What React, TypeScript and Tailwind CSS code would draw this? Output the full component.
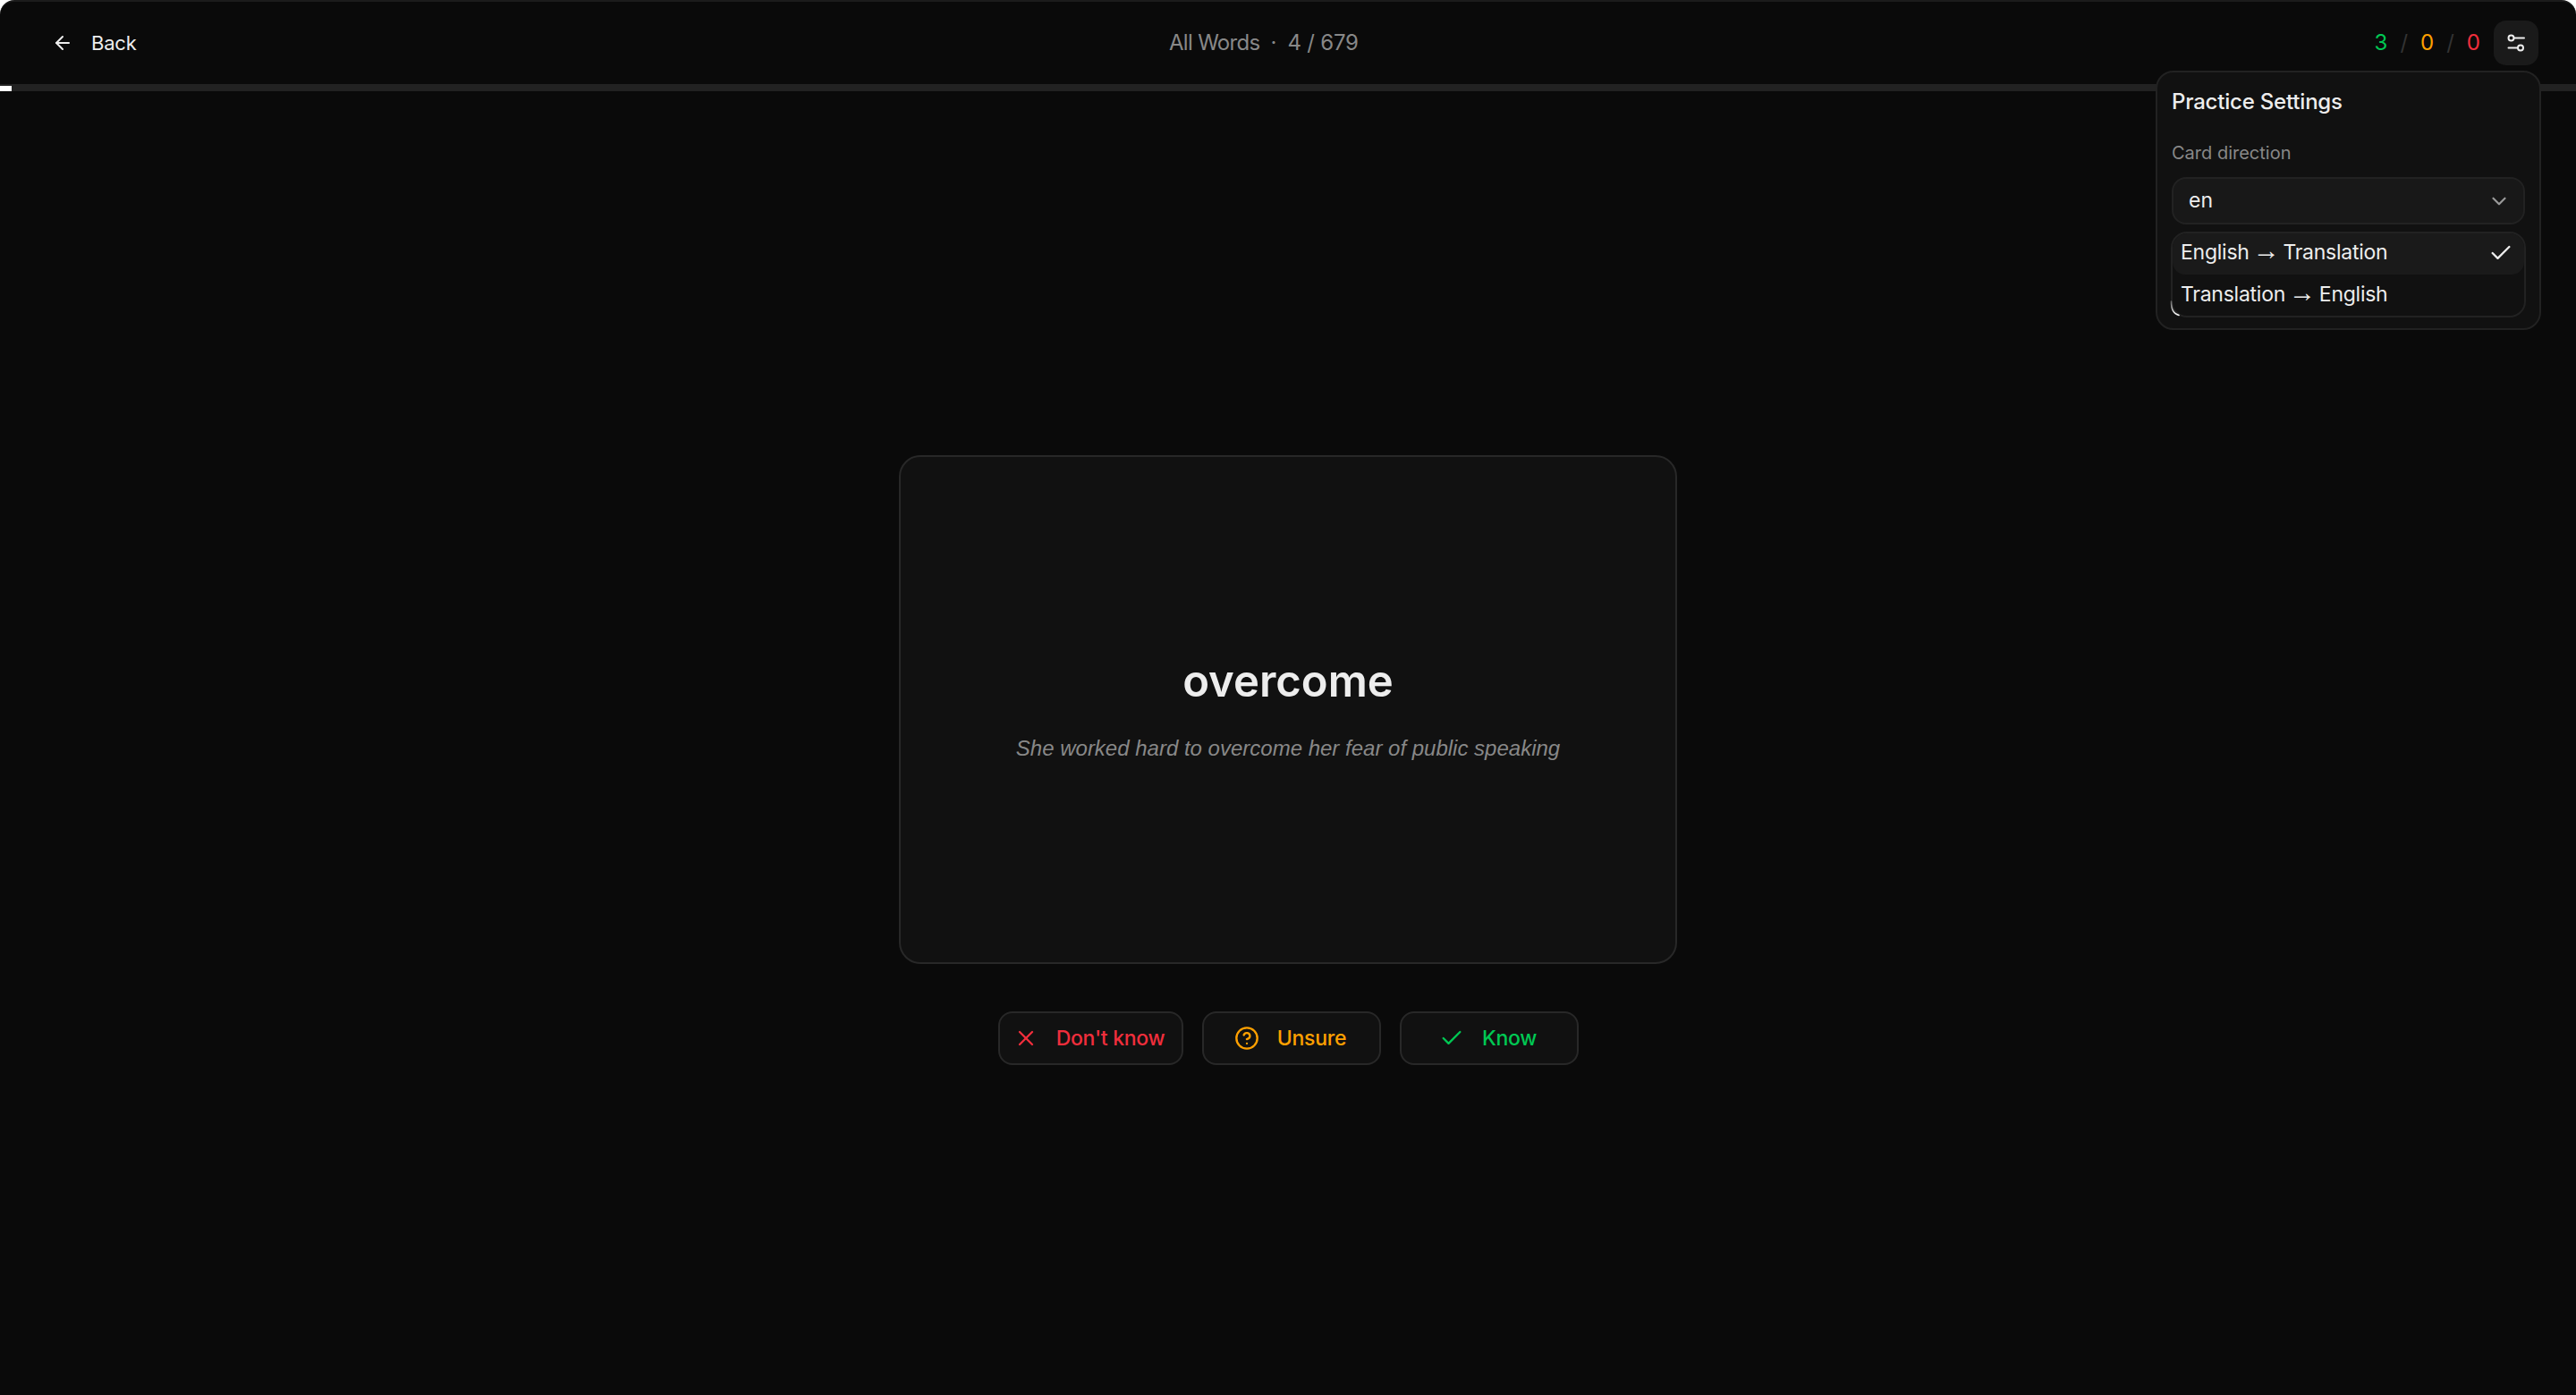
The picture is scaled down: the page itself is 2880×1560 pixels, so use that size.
import { ArrowLeft, Check, ChevronDown, CircleHelp, X } from "lucide-react";

function Sliders() {
  return (
    <svg width="24" height="24" viewBox="0 0 24 24" fill="none" stroke="currentColor" strokeWidth="2" strokeLinecap="round">
      <circle cx="6.5" cy="6.5" r="3" />
      <path d="M10 6.5H21" />
      <circle cx="17" cy="17.5" r="3" />
      <path d="M3.5 17.5H13.5" />
    </svg>
  );
}

function Arrow() {
  return <span className="mx-[4px] font-['Liberation_Sans',sans-serif] text-[30px] font-normal leading-[0]">→</span>;
}

export default function App() {
  return (
    <div className="relative flex h-[1560px] w-[2880px] flex-col overflow-hidden rounded-t-[16px] border-t-2 border-[#1c1c1c] bg-[#0a0a0a] font-['Inter',sans-serif] text-white">
      <header className="flex h-[92px] shrink-0 items-center justify-between pl-[58px] pr-[42px]">
        <div className="flex items-center gap-[20px] text-[22px] tracking-[-0.2px] text-[#ededed]">
          <ArrowLeft size={24} strokeWidth={2} />
          <span>Back</span>
        </div>
        <div className="absolute left-[1307px] flex items-center text-[24px] text-[#888888]">
          <span className="tracking-[-0.7px]">All Words</span>
          <span className="mx-[12px]">·</span>
          <span className="tracking-[-0.2px]">4 / 679</span>
        </div>
        <div className="flex items-center gap-[15px]">
          <div className="flex items-center gap-[14px] text-[24px]">
            <span className="text-[#00c853]">3</span>
            <span className="text-[#333333]">/</span>
            <span className="text-[#ffa000]">0</span>
            <span className="text-[#333333]">/</span>
            <span className="text-[#f02e3c]">0</span>
          </div>
          <button className="flex h-[50px] w-[50px] items-center justify-center rounded-[14px] bg-[#1a1a1a] text-[#ededed]">
            <Sliders />
          </button>
        </div>
      </header>
      <div className="h-[8px] w-full shrink-0 bg-[#222222]">
        <div className="mt-[2px] h-[6px] w-[13px] bg-white" />
      </div>
      <main className="flex flex-1 flex-col items-center pt-[407px]">
        <div className="flex h-[569px] w-[870px] flex-col items-center justify-center rounded-[24px] border-2 border-[#282828] bg-[#111111]">
          <h1 className="text-[49px] font-semibold leading-[58px] text-[#ededed]">overcome</h1>
          <p className="mt-[28px] font-['Liberation_Sans',sans-serif] text-[24px] italic text-[#888888]">She worked hard to overcome her fear of public speaking</p>
        </div>
        <div className="mt-[53px] flex gap-[21px] text-[23px] font-medium tracking-[-0.3px]">
          <button className="flex h-[60px] w-[207px] items-center justify-center gap-[20px] rounded-[16px] border-2 border-[#282828] bg-[#111111] pr-[3px] text-[#f02e3c]">
            <X size={28} /> <span>Don't know</span>
          </button>
          <button className="flex h-[60px] w-[200px] items-center justify-center gap-[20px] rounded-[16px] border-2 border-[#282828] bg-[#111111] pr-[2px] text-[#ffa000]">
            <CircleHelp size={28} /> <span>Unsure</span>
          </button>
          <button className="flex h-[60px] w-[200px] items-center justify-center gap-[20px] rounded-[16px] border-2 border-[#282828] bg-[#111111] pr-[2px] text-[#00c853]">
            <Check size={28} /> <span>Know</span>
          </button>
        </div>
      </main>
      <div className="absolute left-[2410px] top-[77px] h-[290px] w-[431px] rounded-[20px] border-2 border-[#222222] bg-[#111111] px-[16px] pt-[17px]">
        <div className="text-[24px] font-medium leading-[32px] tracking-[-0.2px] text-[#ededed]">Practice Settings</div>
        <div className="mt-[29px] text-[20px] leading-[24px] text-[#888888]">Card direction</div>
        <div className="mt-[15px] flex h-[53px] w-[395px] items-center justify-between rounded-[16px] border-2 border-[#222222] bg-[#181818] pl-[17px] pr-[14px] text-[23px] text-[#ededed]">
          <span>en</span>
          <ChevronDown size={26} className="text-[#999999]" />
        </div>
        <div className="absolute left-[15px] top-[178px] w-[397px] overflow-hidden rounded-[18px] border-2 border-[#222222] bg-[#111111] text-[23px] tracking-[-0.25px] text-[#ededed]">
          <div className="flex h-[46px] items-center justify-between rounded-[14px] bg-[#1a1a1a] pb-[3px] pl-[9px] pr-[12px]">
            <span>English<Arrow />Translation</span>
            <Check size={28} />
          </div>
          <div className="flex h-[46px] items-center pb-[1px] pl-[9px]"><span>Translation<Arrow />English</span></div>
        </div>
        <svg className="absolute left-[14px] top-[255px]" width="12" height="18" viewBox="0 0 12 18" fill="none">
          <defs>
            <linearGradient id="artifact" x1="0" y1="0" x2="0" y2="1">
              <stop offset="0" stopColor="#666666" />
              <stop offset="1" stopColor="#ffffff" />
            </linearGradient>
          </defs>
          <path d="M1.5 1C1.5 9 3 14 10 16.5" stroke="url(#artifact)" strokeWidth="1.6" strokeLinecap="round" />
        </svg>
      </div>
    </div>
  );
}
